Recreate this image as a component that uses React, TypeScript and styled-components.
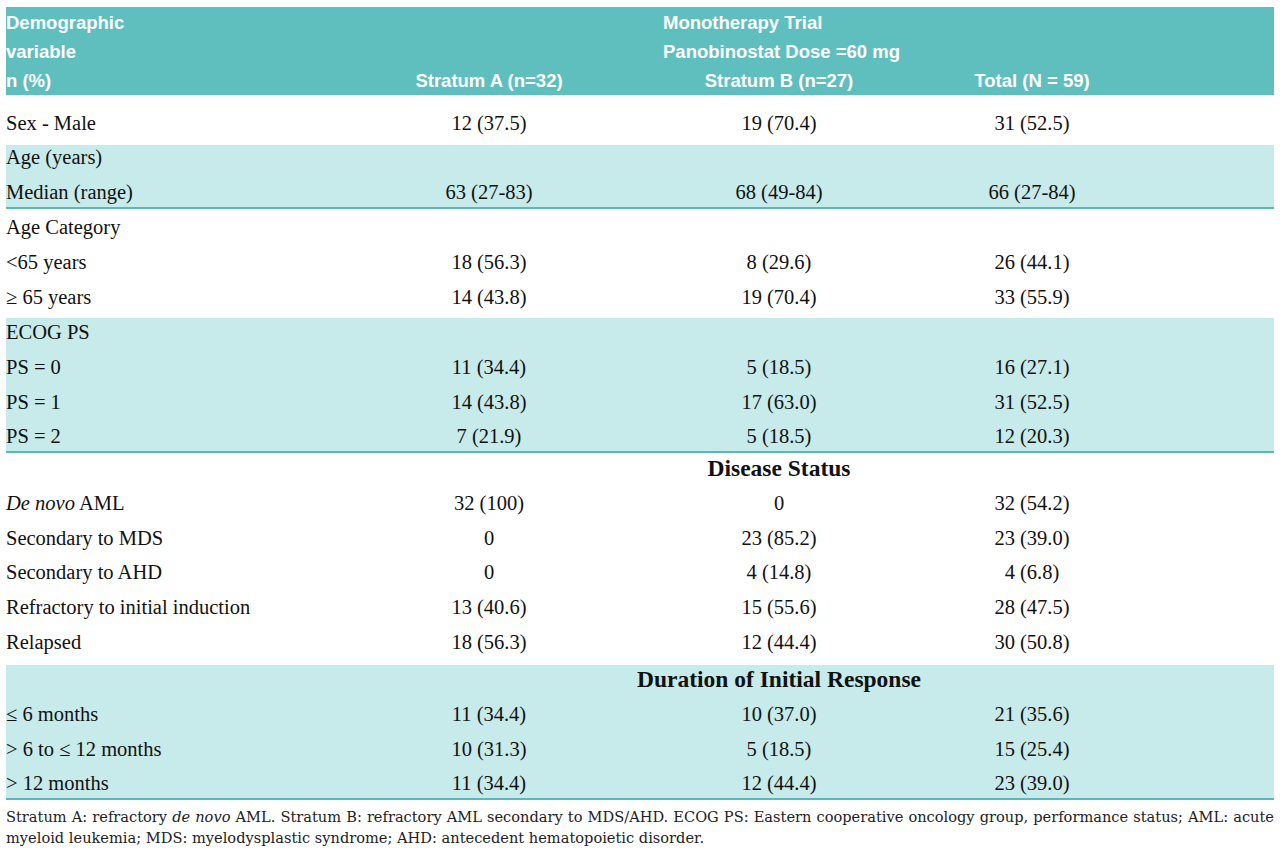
import React from 'react';
import styled, { createGlobalStyle } from 'styled-components';

const GlobalStyle = createGlobalStyle`
  html, body {
    margin: 0;
    padding: 0;
    background: #ffffff;
  }
`;

const COLS = '338px 290px 290px 216px 1fr';

const Page = styled.div`
  width: 1268px;
  padding: 7px 6px 0 6px;
  color: #111111;
  font-family: 'Liberation Serif', 'Times New Roman', serif;
`;

const Head = styled.div`
  display: grid;
  grid-template-columns: ${COLS};
  height: 88px;
  background: #5fbebe;
  color: #ffffff;
  font-family: 'Liberation Sans', Arial, sans-serif;
  font-weight: bold;
  font-size: 18.5px;
  line-height: 29px;
`;

const HeadCell = styled.div<{ $center?: boolean }>`
  display: flex;
  flex-direction: column;
  justify-content: flex-end;
  align-items: ${(p) => (p.$center ? 'center' : 'flex-start')};
  white-space: nowrap;
`;

const HeadLine = styled.div<{ $indent?: number }>`
  align-self: ${(p) => (p.$indent !== undefined ? 'flex-start' : 'auto')};
  padding-left: ${(p) => p.$indent ?? 0}px;
`;

const Group = styled.div<{ $h: number; $pt: number; $shade?: boolean; $rule?: boolean }>`
  padding-top: ${(p) => p.$pt}px;
  box-sizing: border-box;
  background: ${(p) => (p.$shade ? '#c7eaea' : '#ffffff')};
  border-bottom: ${(p) => (p.$rule ? '2px solid #5cb8b8' : 'none')};
  height: ${(p) => p.$h + (p.$rule ? 2 : 0)}px;
`;

const Row = styled.div`
  display: grid;
  grid-template-columns: ${COLS};
  height: 34.8px;
  font-size: 20.5px;
  line-height: 24px;
  white-space: nowrap;
`;

const Label = styled.div`
  text-align: left;
`;

const Value = styled.div`
  text-align: center;
`;

const Section = styled.div`
  grid-column: 3;
  justify-self: center;
  font-weight: bold;
  font-size: 23.5px;
  line-height: 24px;
`;

const Note = styled.div`
  padding-top: 5.5px;
  font-family: 'DejaVu Serif', 'Liberation Serif', serif;
  font-size: 14.6px;
  line-height: 21px;
  color: #222222;
`;

const NoteLine = styled.div<{ $justify?: boolean }>`
  text-align: ${(p) => (p.$justify ? 'justify' : 'left')};
  text-align-last: ${(p) => (p.$justify ? 'justify' : 'auto')};
  white-space: nowrap;
`;

type Item = { label: React.ReactNode; a?: string; b?: string; t?: string };

const DataRow = ({ label, a, b, t }: Item) => (
  <Row>
    <Label>{label}</Label>
    <Value>{a}</Value>
    <Value>{b}</Value>
    <Value>{t}</Value>
  </Row>
);

const disease: Item[] = [
  { label: <><em>De novo</em> AML</>, a: '32 (100)', b: '0', t: '32 (54.2)' },
  { label: 'Secondary to MDS', a: '0', b: '23 (85.2)', t: '23 (39.0)' },
  { label: 'Secondary to AHD', a: '0', b: '4 (14.8)', t: '4 (6.8)' },
  { label: 'Refractory to initial induction', a: '13 (40.6)', b: '15 (55.6)', t: '28 (47.5)' },
  { label: 'Relapsed', a: '18 (56.3)', b: '12 (44.4)', t: '30 (50.8)' },
];

const duration: Item[] = [
  { label: '≤ 6 months', a: '11 (34.4)', b: '10 (37.0)', t: '21 (35.6)' },
  { label: '> 6 to ≤ 12 months', a: '10 (31.3)', b: '5 (18.5)', t: '15 (25.4)' },
  { label: '> 12 months', a: '11 (34.4)', b: '12 (44.4)', t: '23 (39.0)' },
];

export default function App() {
  return (
    <Page>
      <GlobalStyle />
      <Head>
        <HeadCell>
          <div>Demographic</div>
          <div>variable</div>
          <div>n (%)</div>
        </HeadCell>
        <HeadCell $center>
          <div>Stratum A (n=32)</div>
        </HeadCell>
        <HeadCell $center>
          <HeadLine $indent={29}>Monotherapy Trial</HeadLine>
          <HeadLine $indent={29}>Panobinostat Dose =60 mg</HeadLine>
          <HeadLine>Stratum B (n=27)</HeadLine>
        </HeadCell>
        <HeadCell $center>
          <div>Total (N = 59)</div>
        </HeadCell>
        <HeadCell />
      </Head>

      <Group $h={50} $pt={16}>
        <DataRow label="Sex - Male" a="12 (37.5)" b="19 (70.4)" t="31 (52.5)" />
      </Group>

      <Group $h={62} $pt={0} $shade $rule>
        <DataRow label="Age (years)" />
        <DataRow label="Median (range)" a="63 (27-83)" b="68 (49-84)" t="66 (27-84)" />
      </Group>

      <Group $h={109} $pt={6}>
        <DataRow label="Age Category" />
        <DataRow label="<65 years" a="18 (56.3)" b="8 (29.6)" t="26 (44.1)" />
        <DataRow label="≥ 65 years" a="14 (43.8)" b="19 (70.4)" t="33 (55.9)" />
      </Group>

      <Group $h={133} $pt={2} $shade $rule>
        <DataRow label="ECOG PS" />
        <DataRow label="PS = 0" a="11 (34.4)" b="5 (18.5)" t="16 (27.1)" />
        <DataRow label="PS = 1" a="14 (43.8)" b="17 (63.0)" t="31 (52.5)" />
        <DataRow label="PS = 2" a="7 (21.9)" b="5 (18.5)" t="12 (20.3)" />
      </Group>

      <Group $h={212} $pt={3}>
        <Row>
          <Section>Disease Status</Section>
        </Row>
        {disease.map((d, i) => (
          <DataRow key={i} {...d} />
        ))}
      </Group>

      <Group $h={133} $pt={2} $shade $rule>
        <Row>
          <Section>Duration of Initial Response</Section>
        </Row>
        {duration.map((d, i) => (
          <DataRow key={i} {...d} />
        ))}
      </Group>

      <Note>
        <NoteLine $justify>
          Stratum A: refractory <em>de novo</em> AML. Stratum B: refractory AML secondary to MDS/AHD. ECOG PS: Eastern cooperative oncology group, performance status; AML: acute
        </NoteLine>
        <NoteLine>
          myeloid leukemia; MDS: myelodysplastic syndrome; AHD: antecedent hematopoietic disorder.
        </NoteLine>
      </Note>
    </Page>
  );
}
